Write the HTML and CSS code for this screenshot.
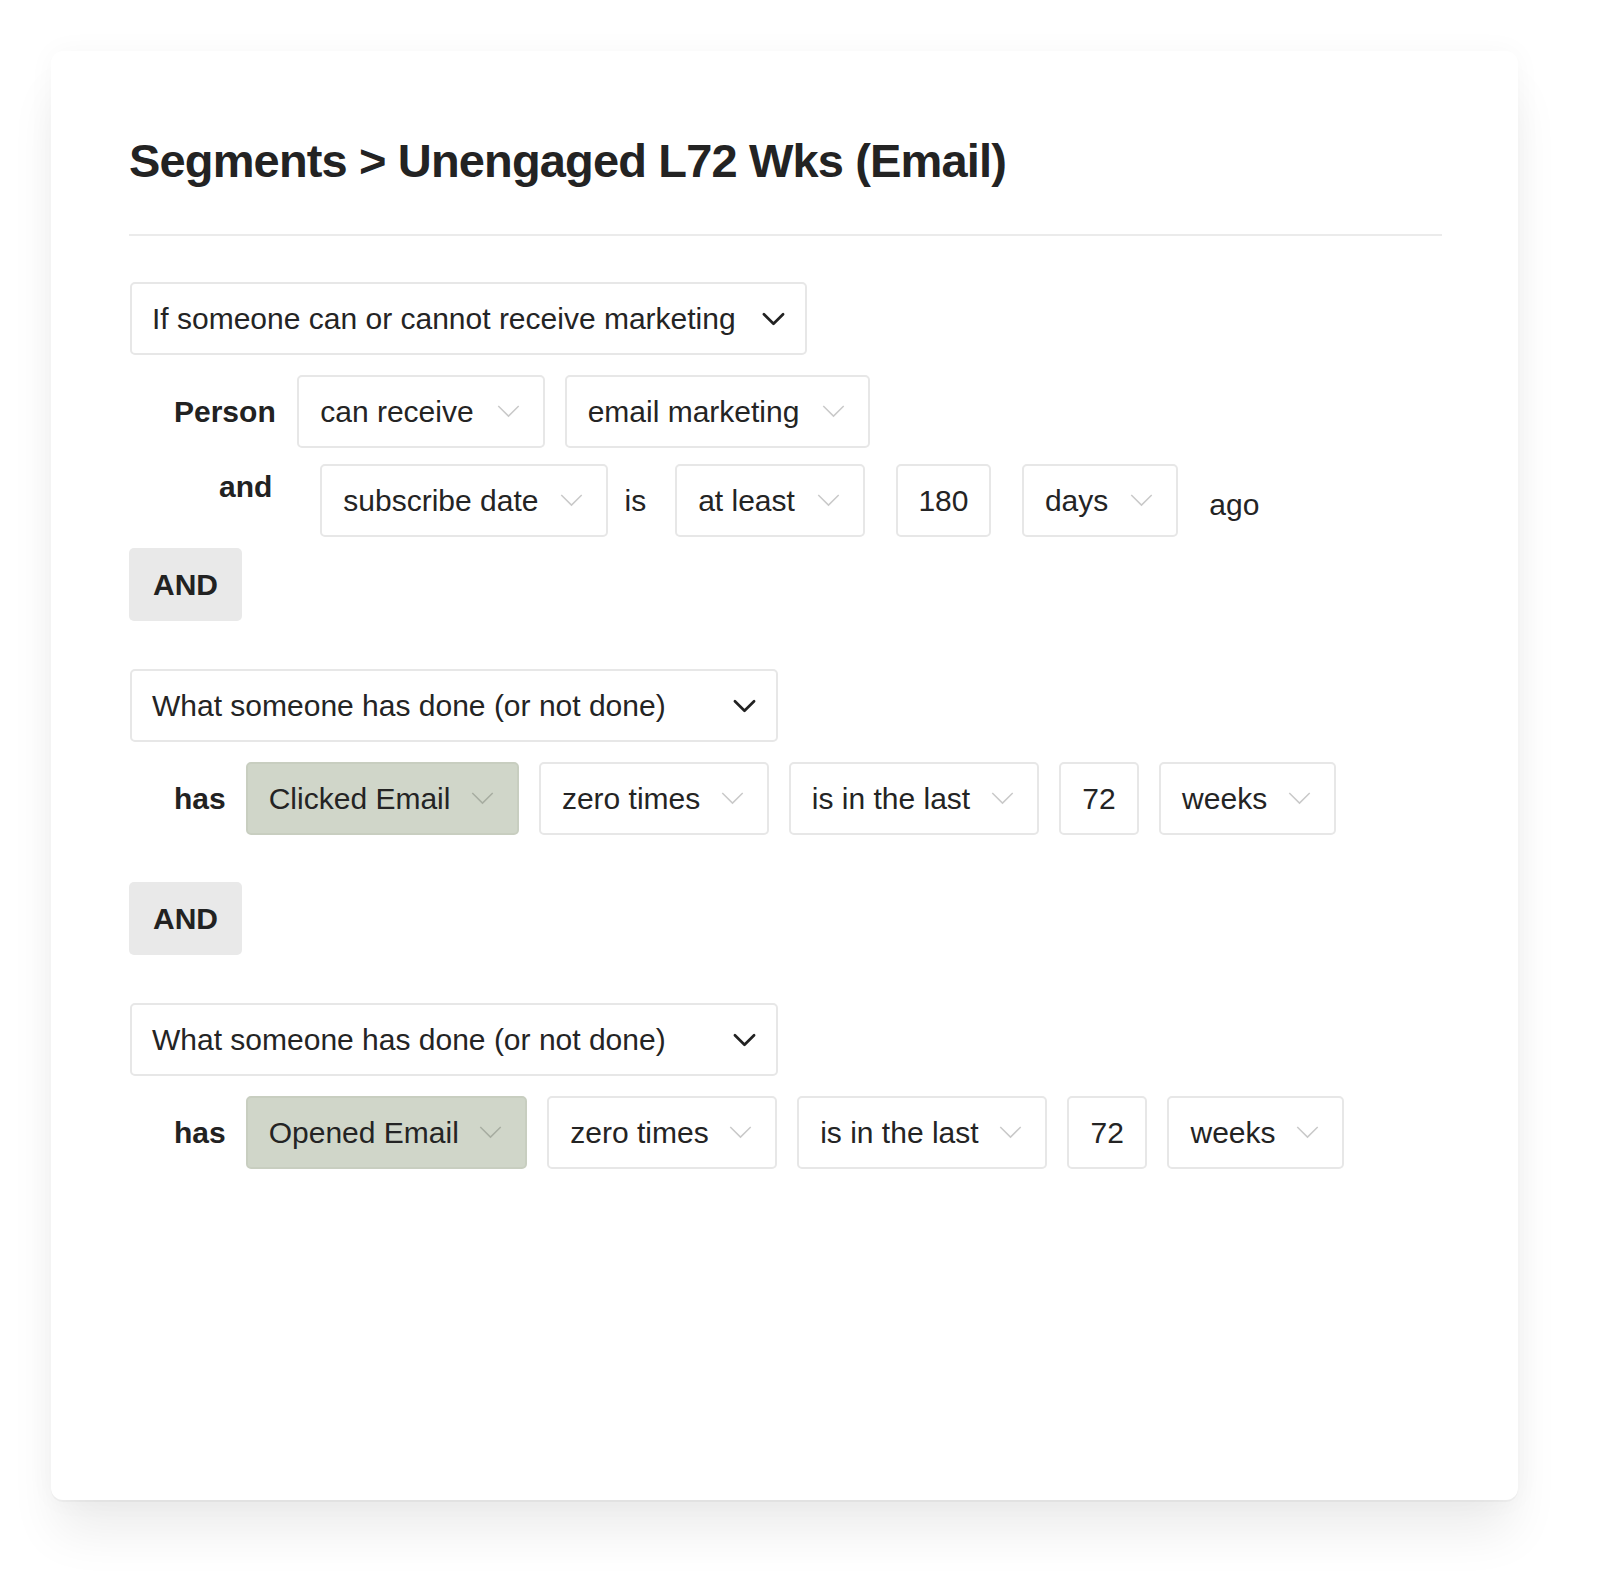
FILE: index.html
```html
<!DOCTYPE html>
<html lang="en">
<head>
<meta charset="utf-8">
<title>Segments</title>
<link rel="stylesheet" href="styles.css">
</head>
<body>
<div class="card">
  <h1 class="title">Segments &gt; Unengaged L72 Wks (Email)</h1>
  <div class="divider"></div>

  <div class="select cond cond-wide">
    <span>If someone can or cannot receive marketing</span>
    <svg class="chev-dark" viewBox="0 0 24 14"><polyline points="2,2 12,12 22,2"/></svg>
  </div>

  <div class="row row-person">
    <span class="label">Person</span>
    <div class="select"><span>can receive</span><svg class="chev" viewBox="0 0 24 14"><polyline points="1,1 12,12 23,1"/></svg></div>
    <div class="select"><span>email marketing</span><svg class="chev" viewBox="0 0 24 14"><polyline points="1,1 12,12 23,1"/></svg></div>
  </div>

  <div class="row row-and">
    <span class="label label-and">and</span>
    <div class="select"><span>subscribe date</span><svg class="chev" viewBox="0 0 24 14"><polyline points="1,1 12,12 23,1"/></svg></div>
    <span class="word word-is">is</span>
    <div class="select"><span>at least</span><svg class="chev" viewBox="0 0 24 14"><polyline points="1,1 12,12 23,1"/></svg></div>
    <div class="select num"><span>180</span></div>
    <div class="select"><span>days</span><svg class="chev" viewBox="0 0 24 14"><polyline points="1,1 12,12 23,1"/></svg></div>
    <span class="word word-ago">ago</span>
  </div>

  <div class="and-btn and-first">AND</div>

  <div class="select cond cond-narrow block-gap">
    <span>What someone has done (or not done)</span>
    <svg class="chev-dark" viewBox="0 0 24 14"><polyline points="2,2 12,12 22,2"/></svg>
  </div>

  <div class="row row-has">
    <span class="label">has</span>
    <div class="select green"><span>Clicked Email</span><svg class="chev" viewBox="0 0 24 14"><polyline points="1,1 12,12 23,1"/></svg></div>
    <div class="select"><span>zero times</span><svg class="chev" viewBox="0 0 24 14"><polyline points="1,1 12,12 23,1"/></svg></div>
    <div class="select"><span>is in the last</span><svg class="chev" viewBox="0 0 24 14"><polyline points="1,1 12,12 23,1"/></svg></div>
    <div class="select num"><span>72</span></div>
    <div class="select"><span>weeks</span><svg class="chev" viewBox="0 0 24 14"><polyline points="1,1 12,12 23,1"/></svg></div>
  </div>

  <div class="and-btn and-second">AND</div>

  <div class="select cond cond-narrow block-gap">
    <span>What someone has done (or not done)</span>
    <svg class="chev-dark" viewBox="0 0 24 14"><polyline points="2,2 12,12 22,2"/></svg>
  </div>

  <div class="row row-has">
    <span class="label">has</span>
    <div class="select green"><span>Opened Email</span><svg class="chev" viewBox="0 0 24 14"><polyline points="1,1 12,12 23,1"/></svg></div>
    <div class="select"><span>zero times</span><svg class="chev" viewBox="0 0 24 14"><polyline points="1,1 12,12 23,1"/></svg></div>
    <div class="select"><span>is in the last</span><svg class="chev" viewBox="0 0 24 14"><polyline points="1,1 12,12 23,1"/></svg></div>
    <div class="select num"><span>72</span></div>
    <div class="select"><span>weeks</span><svg class="chev" viewBox="0 0 24 14"><polyline points="1,1 12,12 23,1"/></svg></div>
  </div>
</div>
</body>
</html>
```

FILE: styles.css
```css
* { box-sizing: border-box; }

html, body {
  margin: 0;
  padding: 0;
  background: #ffffff;
}

body {
  font-family: "Liberation Sans", Arial, sans-serif;
  color: #222222;
  width: 1600px;
  height: 1583px;
  overflow: hidden;
}

.card {
  margin: 51px 0 0 51px;
  width: 1467px;
  height: 1449px;
  background: #ffffff;
  border-radius: 12px;
  padding: 82px 76px 0 78px;
  box-shadow: 0 38px 50px -6px rgba(0, 0, 0, 0.075), 0 0 28px rgba(0, 0, 0, 0.035), 0 2px 0 rgba(0, 0, 0, 0.03);
}

.title {
  margin: 0;
  font-size: 47px;
  line-height: 56px;
  font-weight: 700;
  letter-spacing: -0.85px;
  color: #232323;
}

.divider {
  margin-top: 45px;
  height: 2px;
  background: #ebebeb;
}

.select {
  display: inline-flex;
  align-items: center;
  height: 73px;
  border: 2px solid #e7e7e7;
  border-radius: 5px;
  background: #ffffff;
  padding: 0 23px 0 21px;
  gap: 23px;
  font-size: 30px;
  color: #242424;
  white-space: nowrap;
  flex: none;
}

.select.num { padding: 0 21.5px; }

.select.green {
  background: #d0d6c9;
  border-color: #c8cec0;
}

.chev {
  width: 23px;
  height: 13px;
  fill: none;
  stroke: #c9c9c9;
  stroke-width: 1.6;
}

.green .chev { stroke: #a7ada1; }

.chev-dark {
  width: 23px;
  height: 14px;
  fill: none;
  stroke: #222222;
  stroke-width: 2.8;
  stroke-linecap: round;
  stroke-linejoin: round;
}

.cond {
  display: flex;
  justify-content: space-between;
  margin-left: 1px;
  padding: 0 20px 0 20px;
}

.cond-wide {
  margin-top: 46px;
  width: 677px;
}

.cond-narrow { width: 648px; }

.block-gap { margin-top: 48px; }

.row {
  display: flex;
  align-items: center;
}

.label {
  font-weight: 700;
  font-size: 30px;
  color: #222222;
  flex: none;
}

.row-person {
  margin-top: 20px;
  padding-left: 45px;
  gap: 20px;
}

.row-person .label { margin-right: 1.5px; }

.row-and {
  margin-top: 16px;
  padding-left: 90px;
  gap: 31px;
}

.row-and .select.num { padding: 0 20.5px; }
.row-and .select { gap: 22px; }

.label-and {
  margin-right: 17px;
  margin-bottom: 28px;
}

.word {
  font-size: 30px;
  color: #242424;
  flex: none;
}

.word-is { margin-left: -15px; margin-right: -2px; }
.word-ago { margin-top: 8px; }

.row-has {
  margin-top: 20px;
  padding-left: 45px;
  gap: 20px;
}

.row-has .select { gap: 20.5px; }
.row-has .select.num { gap: 0; }

.and-btn {
  width: 113px;
  height: 73px;
  border-radius: 5px;
  background: #e9e9e9;
  display: flex;
  align-items: center;
  justify-content: center;
  font-size: 30px;
  font-weight: 700;
  color: #222222;
}

.and-first { margin-top: 11px; }
.and-second { margin-top: 47px; }
```
